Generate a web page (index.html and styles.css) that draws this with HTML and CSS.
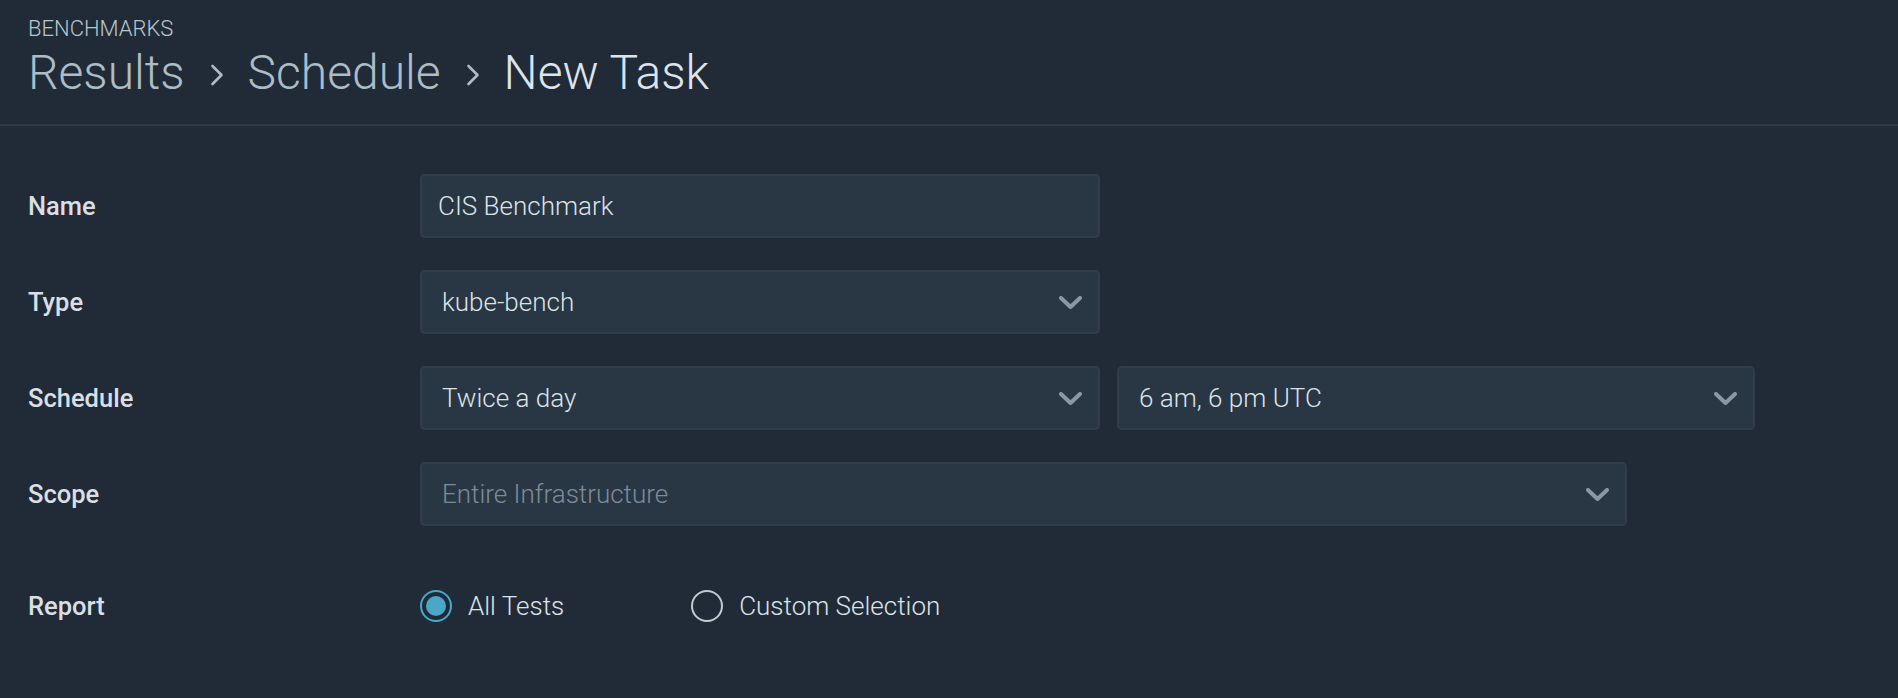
FILE: index.html
```html
<!DOCTYPE html>
<html lang="en">
<head>
<meta charset="utf-8">
<title>Benchmarks - New Task</title>
<link rel="stylesheet" href="styles.css">
</head>
<body>
<header class="page-header">
  <div class="eyebrow">BENCHMARKS</div>
  <h1 class="crumbs">
    <span class="crumb">Results</span>
    <svg class="sep" width="14" height="22" viewBox="0 0 14 22"><path d="M2.5 2 L11.5 11 L2.5 20"/></svg>
    <span class="crumb">Schedule</span>
    <svg class="sep" width="14" height="22" viewBox="0 0 14 22"><path d="M2.5 2 L11.5 11 L2.5 20"/></svg>
    <span class="crumb current">New Task</span>
  </h1>
</header>

<main class="form">
  <div class="row">
    <div class="label">Name</div>
    <div class="fields">
      <div class="field text w-680">CIS Benchmark</div>
    </div>
  </div>

  <div class="row">
    <div class="label">Type</div>
    <div class="fields">
      <div class="field select w-680">
        <span>kube-bench</span>
        <svg class="chev" width="23" height="13" viewBox="0 0 23 13"><path d="M2 2 L11.5 11 L21 2"/></svg>
      </div>
    </div>
  </div>

  <div class="row">
    <div class="label">Schedule</div>
    <div class="fields">
      <div class="field select w-680">
        <span>Twice a day</span>
        <svg class="chev" width="23" height="13" viewBox="0 0 23 13"><path d="M2 2 L11.5 11 L21 2"/></svg>
      </div>
      <div class="field select w-638">
        <span>6 am, 6 pm UTC</span>
        <svg class="chev" width="23" height="13" viewBox="0 0 23 13"><path d="M2 2 L11.5 11 L21 2"/></svg>
      </div>
    </div>
  </div>

  <div class="row">
    <div class="label">Scope</div>
    <div class="fields">
      <div class="field select w-1207">
        <span class="placeholder">Entire Infrastructure</span>
        <svg class="chev" width="23" height="13" viewBox="0 0 23 13"><path d="M2 2 L11.5 11 L21 2"/></svg>
      </div>
    </div>
  </div>

  <div class="row report">
    <div class="label">Report</div>
    <div class="fields radios">
      <label class="radio checked"><span class="dot"></span><span>All Tests</span></label>
      <label class="radio"><span class="dot"></span><span>Custom Selection</span></label>
    </div>
  </div>
</main>
</body>
</html>
```

FILE: styles.css
```css
html, body {
  margin: 0;
  padding: 0;
}

body {
  background: #212b38;
  font-family: Roboto, "Liberation Sans", sans-serif;
  color: #dde3e8;
  height: 698px;
  overflow: hidden;
}

.page-header {
  padding: 16px 28px 23px;
  border-bottom: 2px solid #2d3947;
}

.eyebrow {
  font-size: 22px;
  font-weight: 300;
  color: #b9c5cd;
  line-height: 25px;
  margin-bottom: 4px;
}

.crumbs {
  margin: 0;
  font-size: 48px;
  font-weight: 300;
  line-height: 56px;
  display: flex;
  align-items: center;
}

.crumb {
  color: #adbcc5;
}

.crumb.current {
  color: #dee4e9;
}

.sep {
  display: block;
  flex: none;
  margin: 4px 24px 0 25px;
  fill: none;
  stroke: #adbcc5;
  stroke-width: 2.6;
  stroke-linecap: round;
  stroke-linejoin: round;
}

.form {
  padding: 48px 0 0 28px;
  display: flex;
  flex-direction: column;
  gap: 32px;
}

.row {
  display: flex;
  align-items: center;
  min-height: 64px;
}

.row.report {
  margin-top: 16px;
}

.label {
  width: 392px;
  flex: none;
  font-size: 25.5px;
  font-weight: 500;
  color: #d9dfe4;
}

.fields {
  display: flex;
  gap: 17px;
}

.field {
  box-sizing: border-box;
  height: 64px;
  background: #293644;
  border: 2px solid #303d4b;
  border-radius: 5px;
  font-size: 26px;
  font-weight: 300;
  color: #dce3e8;
  display: flex;
  align-items: center;
}

.field.text {
  padding-left: 16px;
}

.field.select {
  padding: 0 16px 0 20px;
  justify-content: space-between;
}

.w-680 { width: 680px; }
.w-638 { width: 638px; }
.w-1207 { width: 1207px; }

.placeholder {
  color: #7d8b97;
}

.chev {
  display: block;
  fill: none;
  stroke: #8a98a4;
  stroke-width: 4;
  stroke-linecap: round;
  stroke-linejoin: round;
}

.radios {
  gap: 127px;
}

.radio {
  display: flex;
  align-items: center;
  gap: 16px;
  font-size: 26px;
  font-weight: 300;
  color: #dce3e8;
}

.dot {
  box-sizing: border-box;
  width: 32px;
  height: 32px;
  border-radius: 50%;
  border: 2px solid #c3cbd1;
  display: flex;
  align-items: center;
  justify-content: center;
}

.radio.checked .dot {
  border-color: #47a8c9;
}

.radio.checked .dot::after {
  content: "";
  width: 20px;
  height: 20px;
  border-radius: 50%;
  background: #4aa7c7;
}
```
